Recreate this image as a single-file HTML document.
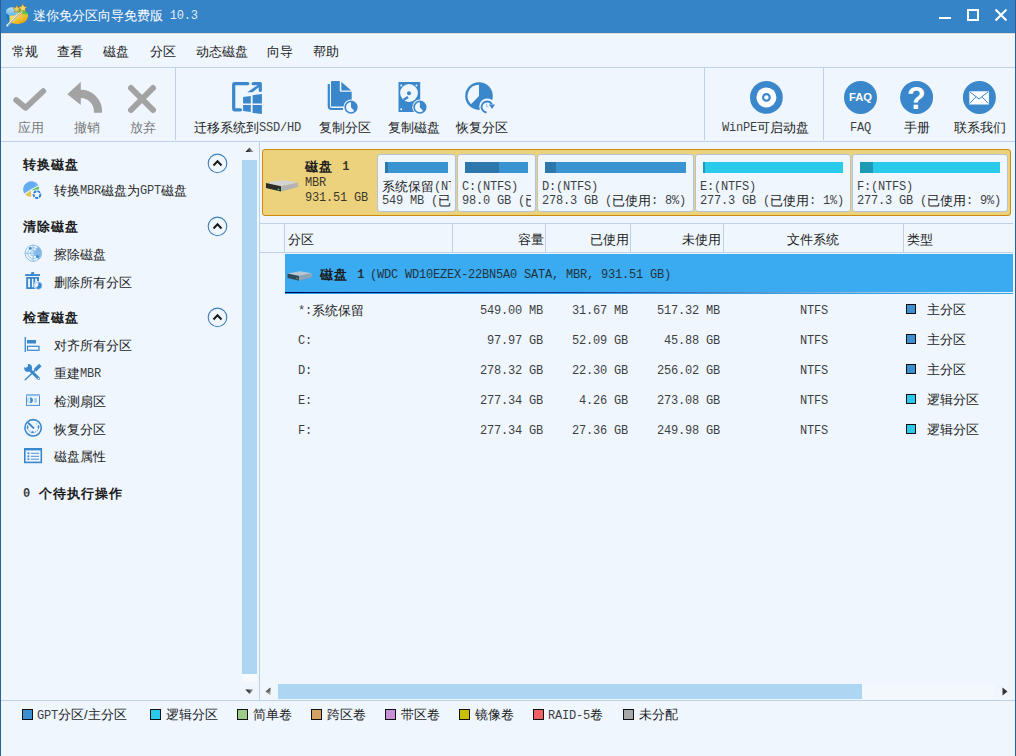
<!DOCTYPE html>
<html><head><meta charset="utf-8">
<style>
*{margin:0;padding:0;box-sizing:border-box}
html,body{width:1016px;height:756px;overflow:hidden;background:#eff6fe}
body{position:relative;font-family:"Liberation Sans",sans-serif;color:#111}
.a{position:absolute}
.t{position:absolute;font-size:13px;line-height:13px;white-space:nowrap;color:#1c1c1c}
.b{font-weight:bold;letter-spacing:1px}
.l{font-family:"Liberation Mono",monospace;font-size:12px;letter-spacing:-0.2px;position:relative;top:-1px;opacity:0.85}
.g{color:#7a7a7a}
.hl{position:absolute;height:1px;background:#bcd0e8}
.vl{position:absolute;width:1px;background:#bcd0e8}
.pb{position:absolute;top:154px;height:58px;background:#eff6fe;border:1px solid #b5c3d4;border-radius:3px;overflow:hidden}
.bar{position:absolute;left:7px;top:7px;height:11px}
.sq{position:absolute;width:11px;height:11px;border:1px solid #111}
</style></head><body>
<!-- window borders -->
<div class="a" style="left:0;top:0;width:1016px;height:33px;background:#3584c8"></div>
<div class="a" style="left:0;top:33px;width:1016px;height:1px;background:#dcd6d3"></div>
<div class="a" style="left:0;top:34px;width:1016px;height:1px;background:#fff"></div>
<div class="a" style="left:0;top:0;width:1px;height:756px;background:#2b5f98"></div>
<div class="a" style="left:1015px;top:0;width:1px;height:756px;background:#2b5f98"></div>
<div class="t" style="left:33px;top:9px;color:#fff">迷你免分区向导免费版 <span class="l" style="margin-left:3px">10.3</span></div>
<!-- window controls -->
<div class="a" style="left:939px;top:17px;width:12px;height:2px;background:#fff"></div>
<div class="a" style="left:967px;top:9px;width:12px;height:12px;border:2px solid #fff"></div>
<svg class="a" style="left:994px;top:8px" width="14" height="14"><path d="M1.5 1.5L12.5 12.5M12.5 1.5L1.5 12.5" stroke="#fff" stroke-width="2"/></svg>

<!-- menu -->
<div class="t" style="left:12px;top:45px">常规</div>
<div class="t" style="left:57px;top:45px">查看</div>
<div class="t" style="left:103px;top:45px">磁盘</div>
<div class="t" style="left:150px;top:45px">分区</div>
<div class="t" style="left:196px;top:45px">动态磁盘</div>
<div class="t" style="left:267px;top:45px">向导</div>
<div class="t" style="left:313px;top:45px">帮助</div>
<div class="hl" style="left:1px;top:67px;width:1014px"></div>

<!-- toolbar -->
<div class="vl" style="left:175px;top:68px;height:72px"></div>
<div class="vl" style="left:704px;top:68px;height:72px"></div>
<div class="vl" style="left:823px;top:68px;height:72px"></div>
<div class="t g" style="left:18px;top:121px">应用</div>
<div class="t g" style="left:74px;top:121px">撤销</div>
<div class="t g" style="left:130px;top:121px">放弃</div>
<div class="t" style="left:194px;top:121px">迁移系统到<span class="l">SSD/HD</span></div>
<div class="t" style="left:319px;top:121px">复制分区</div>
<div class="t" style="left:388px;top:121px">复制磁盘</div>
<div class="t" style="left:456px;top:121px">恢复分区</div>
<div class="t" style="left:722px;top:121px"><span class="l">WinPE</span>可启动盘</div>
<div class="t" style="left:850px;top:121px"><span class="l">FAQ</span></div>
<div class="t" style="left:904px;top:121px">手册</div>
<div class="t" style="left:954px;top:121px">联系我们</div>
<div class="hl" style="left:1px;top:141px;width:1014px"></div>

<!-- left panel -->
<div class="vl" style="left:259px;top:142px;height:558px"></div>
<div class="t b" style="left:23px;top:158px">转换磁盘</div>
<div class="t" style="left:54px;top:184px">转换<span class="l">MBR</span>磁盘为<span class="l">GPT</span>磁盘</div>
<div class="t b" style="left:23px;top:220px">清除磁盘</div>
<div class="t" style="left:54px;top:248px">擦除磁盘</div>
<div class="t" style="left:54px;top:276px">删除所有分区</div>
<div class="t b" style="left:23px;top:311px">检查磁盘</div>
<div class="t" style="left:54px;top:339px">对齐所有分区</div>
<div class="t" style="left:54px;top:367px">重建<span class="l">MBR</span></div>
<div class="t" style="left:54px;top:395px">检测扇区</div>
<div class="t" style="left:54px;top:423px">恢复分区</div>
<div class="t" style="left:54px;top:450px">磁盘属性</div>
<div class="t b" style="left:23px;top:487px"><span class="l" style="font-weight:bold">0</span>&nbsp; 个待执行操作</div>
<!-- left scrollbar -->
<div class="a" style="left:242px;top:160px;width:15px;height:514px;background:#acd6f1"></div>
<div class="a" style="left:242px;top:674px;width:15px;height:8px;background:#f6fafd"></div>
<svg class="a" style="left:245px;top:147px" width="9" height="6"><defs><linearGradient id="ga" x1="0" y1="0" x2="1" y2="0"><stop offset="0" stop-color="#000"/><stop offset="1" stop-color="#b0b0b0"/></linearGradient></defs><path d="M0.5 5L4.5 0.5L8.5 5Z" fill="url(#ga)"/></svg>
<svg class="a" style="left:245px;top:689px" width="9" height="6"><path d="M0.5 0.5L4.5 5L8.5 0.5Z" fill="url(#ga)"/></svg>
<div class="hl" style="left:1px;top:700px;width:1014px"></div>

<!-- disk map -->
<div class="a" style="left:262px;top:149px;width:749px;height:67px;background:#ecd27c;border:1px solid #d08a0a;border-radius:3px"></div>
<div class="t b" style="left:305px;top:160px">磁盘&nbsp; <span class="l" style="font-weight:bold">1</span></div>
<div class="t" style="left:305px;top:176px"><span class="l">MBR</span></div>
<div class="t" style="left:305px;top:191px"><span class="l">931.51 GB</span></div>

<div class="pb" style="left:377px;width:79px"><div class="bar" style="width:63px;background:#3c93d2"><div class="a" style="left:0;top:0;width:3px;height:11px;background:#2d77ad"></div></div><div class="a" style="left:4px;right:4px;top:0;bottom:0;overflow:hidden"><div class="t" style="left:0;top:25px">系统保留<span class="l">(NTFS)</span></div><div class="t" style="left:0;top:39px"><span class="l">549 MB (</span>已使用</div></div></div>
<div class="pb" style="left:457px;width:79px"><div class="bar" style="width:63px;background:#3c93d2"><div class="a" style="left:0;top:0;width:34px;height:11px;background:#2d77ad"></div></div><div class="a" style="left:4px;right:4px;top:0;bottom:0;overflow:hidden"><div class="t" style="left:0;top:25px"><span class="l">C:(NTFS)</span></div><div class="t" style="left:0;top:39px"><span class="l">98.0 GB (</span>已使用</div></div></div>
<div class="pb" style="left:537px;width:157px"><div class="bar" style="width:141px;background:#3c93d2"><div class="a" style="left:0;top:0;width:11px;height:11px;background:#2d77ad"></div></div><div class="a" style="left:4px;right:4px;top:0;bottom:0;overflow:hidden"><div class="t" style="left:0;top:25px"><span class="l">D:(NTFS)</span></div><div class="t" style="left:0;top:39px"><span class="l">278.3 GB (</span>已使用<span class="l">: 8%)</span></div></div></div>
<div class="pb" style="left:695px;width:156px"><div class="bar" style="width:140px;background:#2acbea"><div class="a" style="left:0;top:0;width:2px;height:11px;background:#1d9ab5"></div></div><div class="a" style="left:4px;right:4px;top:0;bottom:0;overflow:hidden"><div class="t" style="left:0;top:25px"><span class="l">E:(NTFS)</span></div><div class="t" style="left:0;top:39px"><span class="l">277.3 GB (</span>已使用<span class="l">: 1%)</span></div></div></div>
<div class="pb" style="left:852px;width:156px"><div class="bar" style="width:140px;background:#2acbea"><div class="a" style="left:0;top:0;width:13px;height:11px;background:#1d9ab5"></div></div><div class="a" style="left:4px;right:4px;top:0;bottom:0;overflow:hidden"><div class="t" style="left:0;top:25px"><span class="l">F:(NTFS)</span></div><div class="t" style="left:0;top:39px"><span class="l">277.3 GB (</span>已使用<span class="l">: 9%)</span></div></div></div>

<!-- table header -->
<div class="hl" style="left:260px;top:223px;width:753px"></div>
<div class="hl" style="left:260px;top:252px;width:753px"></div>
<div class="vl" style="left:284px;top:224px;height:28px"></div>
<div class="vl" style="left:452px;top:224px;height:28px"></div>
<div class="vl" style="left:545px;top:224px;height:28px"></div>
<div class="vl" style="left:630px;top:224px;height:28px"></div>
<div class="vl" style="left:723px;top:224px;height:28px"></div>
<div class="vl" style="left:903px;top:224px;height:28px"></div>
<div class="t" style="left:288px;top:233px">分区</div>
<div class="t" style="left:518px;top:233px">容量</div>
<div class="t" style="left:590px;top:233px">已使用</div>
<div class="t" style="left:682px;top:233px">未使用</div>
<div class="t" style="left:787px;top:233px">文件系统</div>
<div class="t" style="left:907px;top:233px">类型</div>

<!-- selected disk row -->
<div class="a" style="left:285px;top:254px;width:728px;height:38px;background:#3aabf0"></div>
<div class="a" style="left:285px;top:292px;width:728px;height:1px;background:linear-gradient(90deg,#000448,#1a3f8a 40%,#8fb0d8 75%,#f2f2f2)"></div>
<div class="a" style="left:285px;top:293px;width:728px;height:1px;background:#2aa3f0"></div>
<div class="t b" style="left:320px;top:268px">磁盘&nbsp; <span class="l" style="font-weight:bold">1</span></div>
<div class="t" style="left:370px;top:268px"><span class="l">(WDC WD10EZEX-22BN5A0 SATA, MBR, 931.51 GB)</span></div>

<!-- rows -->
<div class="t" style="left:298px;top:304px"><span class="l">*:</span>系统保留</div>
<div class="t r" style="right:473px;top:304px"><span class="l">549.00 MB</span></div>
<div class="t r" style="right:388px;top:304px"><span class="l">31.67 MB</span></div>
<div class="t r" style="right:296px;top:304px"><span class="l">517.32 MB</span></div>
<div class="t" style="left:800px;top:304px"><span class="l">NTFS</span></div>
<div class="sq" style="width:10px;height:10px;left:906px;top:304px;background:#3c8fd0"></div>
<div class="t" style="left:927px;top:303px">主分区</div>
<div class="t" style="left:298px;top:334px"><span class="l">C:</span></div>
<div class="t r" style="right:473px;top:334px"><span class="l">97.97 GB</span></div>
<div class="t r" style="right:388px;top:334px"><span class="l">52.09 GB</span></div>
<div class="t r" style="right:296px;top:334px"><span class="l">45.88 GB</span></div>
<div class="t" style="left:800px;top:334px"><span class="l">NTFS</span></div>
<div class="sq" style="width:10px;height:10px;left:906px;top:334px;background:#3c8fd0"></div>
<div class="t" style="left:927px;top:333px">主分区</div>
<div class="t" style="left:298px;top:364px"><span class="l">D:</span></div>
<div class="t r" style="right:473px;top:364px"><span class="l">278.32 GB</span></div>
<div class="t r" style="right:388px;top:364px"><span class="l">22.30 GB</span></div>
<div class="t r" style="right:296px;top:364px"><span class="l">256.02 GB</span></div>
<div class="t" style="left:800px;top:364px"><span class="l">NTFS</span></div>
<div class="sq" style="width:10px;height:10px;left:906px;top:364px;background:#3c8fd0"></div>
<div class="t" style="left:927px;top:363px">主分区</div>
<div class="t" style="left:298px;top:394px"><span class="l">E:</span></div>
<div class="t r" style="right:473px;top:394px"><span class="l">277.34 GB</span></div>
<div class="t r" style="right:388px;top:394px"><span class="l">4.26 GB</span></div>
<div class="t r" style="right:296px;top:394px"><span class="l">273.08 GB</span></div>
<div class="t" style="left:800px;top:394px"><span class="l">NTFS</span></div>
<div class="sq" style="width:10px;height:10px;left:906px;top:394px;background:#2ac8ea"></div>
<div class="t" style="left:927px;top:393px">逻辑分区</div>
<div class="t" style="left:298px;top:424px"><span class="l">F:</span></div>
<div class="t r" style="right:473px;top:424px"><span class="l">277.34 GB</span></div>
<div class="t r" style="right:388px;top:424px"><span class="l">27.36 GB</span></div>
<div class="t r" style="right:296px;top:424px"><span class="l">249.98 GB</span></div>
<div class="t" style="left:800px;top:424px"><span class="l">NTFS</span></div>
<div class="sq" style="width:10px;height:10px;left:906px;top:424px;background:#2ac8ea"></div>
<div class="t" style="left:927px;top:423px">逻辑分区</div>
<!-- right scrollbar -->
<svg class="a" style="left:265px;top:687px" width="6" height="9"><defs><linearGradient id="gb" x1="0" y1="0" x2="0.3" y2="1"><stop offset="0" stop-color="#000"/><stop offset="1" stop-color="#b8b8b8"/></linearGradient></defs><path d="M5.5 0.5L0.5 4.5L5.5 8.5Z" fill="url(#gb)"/></svg>
<svg class="a" style="left:1002px;top:687px" width="6" height="9"><path d="M0.5 0.5L5.5 4.5L0.5 8.5Z" fill="#333"/></svg>
<div class="a" style="left:278px;top:684px;width:584px;height:15px;background:#acd6f1"></div>
<div class="a" style="left:862px;top:684px;width:133px;height:15px;background:#f3f8fd"></div>

<!-- legend -->
<div class="sq" style="left:22px;top:709px;background:#3c8fd0"></div><div class="t" style="left:37px;top:708px"><span class="l" style="top:0">GPT</span>分区/主分区</div>
<div class="sq" style="left:150px;top:709px;background:#2ac8ea"></div><div class="t" style="left:166px;top:708px">逻辑分区</div>
<div class="sq" style="left:237px;top:709px;background:#9ecb88"></div><div class="t" style="left:253px;top:708px">简单卷</div>
<div class="sq" style="left:311px;top:709px;background:#d2a263"></div><div class="t" style="left:327px;top:708px">跨区卷</div>
<div class="sq" style="left:385px;top:709px;background:#c890d8"></div><div class="t" style="left:401px;top:708px">带区卷</div>
<div class="sq" style="left:459px;top:709px;background:#c8c000"></div><div class="t" style="left:475px;top:708px">镜像卷</div>
<div class="sq" style="left:533px;top:709px;background:#f06262"></div><div class="t" style="left:548px;top:708px"><span class="l" style="top:0">RAID-5</span>卷</div>
<div class="sq" style="left:623px;top:709px;background:#a8a8a8"></div><div class="t" style="left:639px;top:708px">未分配</div>

<!-- ICONS -->
<svg class="a" style="left:0;top:0" width="34" height="32" viewBox="0 0 34 32">
 <defs><linearGradient id="yg" x1="0" y1="0" x2="1" y2="1"><stop offset="0" stop-color="#fff08a"/><stop offset="0.55" stop-color="#f2c42a"/><stop offset="1" stop-color="#dc8c12"/></linearGradient>
 <linearGradient id="bg1" x1="0" y1="0" x2="0" y2="1"><stop offset="0" stop-color="#bfe3f8"/><stop offset="1" stop-color="#5fb2e6"/></linearGradient></defs>
 <ellipse cx="17" cy="15.6" rx="10.8" ry="8.6" fill="#1678c8"/>
 <path d="M9.5 13 Q16 10 27.8 13.5 V17 A10.8 7.2 0 0 1 9.5 22 Z" fill="url(#yg)"/>
 <ellipse cx="12" cy="11.5" rx="6" ry="4.3" fill="url(#bg1)"/>
 <path d="M17 12.5 L19 9 Q25 9 27.8 13.5 L27.8 15 Z" fill="#58c84a"/>
 <path d="M17 12.5 L27.8 15 V17 L17 14 Z" fill="#e6c22e"/>
 <path d="M7.2 25.5 L21.5 11.5" stroke="#e8e8e8" stroke-width="1.8" stroke-linecap="round"/>
 <path d="M8 25.2 L21.5 11.8" stroke="#8a8a8a" stroke-width="0.8"/>
 <path d="M16.8 5.2l1.2 2.4 2.6.3-1.9 1.8.5 2.6-2.4-1.3-2.4 1.3.5-2.6-1.9-1.8 2.6-.3z" fill="#ead060" stroke="#8a6a10" stroke-width="0.5"/>
 <path d="M22.8 3.8l1.4 2.7 2.9.4-2.1 2 .5 2.9-2.7-1.4-2.7 1.4.5-2.9-2.1-2 2.9-.4z" fill="#f2d868" stroke="#8a6a10" stroke-width="0.5"/>
 <path d="M21 13.5l1 2 2.2.3-1.6 1.5.4 2.2-2-1.1-2 1.1.4-2.2-1.6-1.5 2.2-.3z" fill="#e8c850" opacity="0.8"/>
</svg>

<!-- grey toolbar icons -->
<svg class="a" style="left:12px;top:85px" width="36" height="28"><path d="M4.2 15 L13.5 22.8 L31.2 6.2" fill="none" stroke="#a3a3a3" stroke-width="5.8" stroke-linecap="round" stroke-linejoin="round"/></svg>
<svg class="a" style="left:66px;top:81px" width="38" height="34"><path d="M1.3 13.3 L14.8 0.8 L14.8 24.1 Z" fill="#a3a3a3"/><path d="M14 12.95 A17.15 17.15 0 0 1 31.95 30.1 V31.7" fill="none" stroke="#a3a3a3" stroke-width="8.2"/></svg>
<svg class="a" style="left:126px;top:83px" width="32" height="32"><path d="M5 5 L27 27 M27 5 L5 27" fill="none" stroke="#a3a3a3" stroke-width="6" stroke-linecap="round"/></svg>

<!-- migrate os -->
<svg class="a" style="left:228px;top:78px" width="38" height="40">
 <path d="M19.8 5.6 H6.5 Q5.7 5.6 5.7 6.4 V31 Q5.7 31.8 6.5 31.8 H12.5" fill="none" stroke="#3a87cc" stroke-width="3.2" stroke-linecap="round"/>
 <path d="M25.2 5.7 H32.3 V12.5" fill="none" stroke="#3a87cc" stroke-width="3.2" stroke-linecap="round" stroke-linejoin="round"/>
 <path d="M19.3 14.3 L30.5 6.5 L32 8.2 L24.5 14.3 Z" fill="#3a87cc"/>
 <path d="M15.1 19 L22.8 18 V25.4 H15.1Z M24.6 17.3 L33.9 16 V25.4 H24.6Z M15.1 27 H22.8 V33.9 L15.1 33Z M24.6 27 H33.9 V36 L24.6 34.9Z" fill="#3a87cc"/>
</svg>
<!-- copy partition -->
<svg class="a" style="left:320px;top:76px" width="42" height="40">
 <path d="M8.8 8 V30 Q8.8 33 11.8 33 H23" fill="none" stroke="#3a87cc" stroke-width="2.2"/>
 <path d="M11 6 Q11 5 12 5 H19.8 V14.8 Q19.8 15.8 20.8 15.8 H31.7 V30.5 H11 Z" fill="#3a87cc"/>
 <path d="M21.3 5.8 L31.2 14.6 H21.3Z" fill="#3a87cc"/>
 <circle cx="31" cy="31.2" r="7.6" fill="#eff6fe"/>
 <circle cx="31" cy="31.2" r="5.8" fill="none" stroke="#3a87cc" stroke-width="1.6"/>
 <path d="M31 31.2 V25.4 A5.8 5.8 0 0 1 34.8 35.6Z" fill="#3a87cc"/>
</svg>

<!-- copy disk -->
<svg class="a" style="left:390px;top:76px" width="42" height="40">
 <rect x="8.5" y="6" width="21.7" height="30" fill="#3a87cc"/>
 <circle cx="19" cy="17" r="8.9" fill="#eff6fe"/>
 <path d="M13.5 24 L18 21" stroke="#3a87cc" stroke-width="2.5"/>
 <circle cx="19" cy="17.3" r="2" fill="#3a87cc"/>
 <circle cx="11.2" cy="9.5" r="1" fill="#eff6fe"/><circle cx="26.5" cy="9.5" r="1" fill="#eff6fe"/><circle cx="11.2" cy="33.2" r="1" fill="#eff6fe"/>
 <circle cx="29.9" cy="31.2" r="7.6" fill="#eff6fe"/>
 <circle cx="29.9" cy="31.2" r="5.8" fill="none" stroke="#3a87cc" stroke-width="1.6"/>
 <path d="M29.9 31.2 V25.4 A5.8 5.8 0 0 1 33.7 35.6Z" fill="#3a87cc"/>
</svg>

<!-- recover partition -->
<svg class="a" style="left:456px;top:76px" width="42" height="40">
 <circle cx="23" cy="20.1" r="13.8" fill="#3a87cc"/>
 <path d="M23 20.1 V8.8 A11.3 11.3 0 0 0 15 28.2Z" fill="#eff6fe"/>
 <circle cx="31.2" cy="30.4" r="8" fill="#eff6fe"/>
 <path d="M30.6 36.5 A5.5 5.5 0 1 1 35.8 28.2" fill="none" stroke="#3a87cc" stroke-width="1.8"/>
 <path d="M33 28.5 L39 28.5 L36 33 Z" fill="#3a87cc"/>
 <path d="M30.7 27.5 V30.8 H32.5" fill="none" stroke="#9cc4ea" stroke-width="1"/>
</svg>

<!-- winpe -->
<svg class="a" style="left:749px;top:80px" width="35" height="35">
 <circle cx="17.4" cy="17.4" r="16.4" fill="#3a87cc"/>
 <circle cx="17.4" cy="17.4" r="10" fill="#fff"/>
 <circle cx="17.4" cy="17.4" r="3.3" fill="none" stroke="#3a87cc" stroke-width="2.2"/>
</svg>
<!-- faq -->
<svg class="a" style="left:843px;top:80px" width="35" height="35">
 <circle cx="17.5" cy="17.4" r="16.5" fill="#3a87cc"/>
 <text x="17.5" y="20.8" text-anchor="middle" font-family="Liberation Sans" font-weight="bold" font-size="11.2" fill="#fff">FAQ</text>
</svg>
<!-- help -->
<svg class="a" style="left:899px;top:80px" width="35" height="35">
 <circle cx="17.6" cy="17.4" r="16.5" fill="#3a87cc"/>
 <text x="17.4" y="28.6" text-anchor="middle" font-family="Liberation Sans" font-weight="bold" font-size="30.5" fill="#fff">?</text>
</svg>
<!-- mail -->
<svg class="a" style="left:962px;top:80px" width="35" height="35">
 <circle cx="17.4" cy="17.4" r="16.5" fill="#3a87cc"/>
 <rect x="7.3" y="11.3" width="19.6" height="13.2" fill="#fff"/>
 <path d="M7.8 11.8 L17 19 L26.2 11.8 M7.8 23.4 L14 16.8 M26.2 23.4 L20 16.8" fill="none" stroke="#3a87cc" stroke-width="1"/>
</svg>

<!-- collapse circles -->
<svg class="a" style="left:207px;top:153px" width="21" height="21"><circle cx="10.5" cy="10.4" r="9.3" fill="none" stroke="#3d7fbe" stroke-width="1.1"/><path d="M6.5 12.5 L10.5 8.3 L14.5 12.5" fill="none" stroke="#1a1a1a" stroke-width="2"/></svg>
<svg class="a" style="left:207px;top:216px" width="21" height="21"><circle cx="10.5" cy="10.4" r="9.3" fill="none" stroke="#3d7fbe" stroke-width="1.1"/><path d="M6.5 12.5 L10.5 8.3 L14.5 12.5" fill="none" stroke="#1a1a1a" stroke-width="2"/></svg>
<svg class="a" style="left:207px;top:307px" width="21" height="21"><circle cx="10.5" cy="10.4" r="9.3" fill="none" stroke="#3d7fbe" stroke-width="1.1"/><path d="M6.5 12.5 L10.5 8.3 L14.5 12.5" fill="none" stroke="#1a1a1a" stroke-width="2"/></svg>

<!-- left icons -->
<svg class="a" style="left:22px;top:180px" width="22" height="20">
 <path d="M9.4 9 L2.3 13.5 A7.3 7.3 0 1 1 16.3 5.3Z" fill="#66adf0"/>
 <path d="M9.8 10 L16.8 6.3 L17 11.5 Z" fill="#62c45a"/>
 <path d="M9 10.5 L3.2 14.5 A7.3 7.3 0 0 0 9.2 16.8Z" fill="#e2c758"/>
 <circle cx="15" cy="14.6" r="5" fill="#eff6fe"/>
 <circle cx="15" cy="14.6" r="3.4" fill="none" stroke="#2c7fd0" stroke-width="1.8" stroke-dasharray="3 1"/>
</svg>
<svg class="a" style="left:23px;top:243px" width="20" height="20">
 <path d="M10.2 10.2 L15.13 3.16 A8.6 8.6 0 0 1 15.73 16.79Z" fill="#7fb5e6"/>
 <circle cx="10.2" cy="10.2" r="8.1" fill="none" stroke="#8cbde8" stroke-width="1"/>
 <circle cx="10.2" cy="10.2" r="5.5" fill="none" stroke="#8cbde8" stroke-width="0.9"/>
 <circle cx="10.2" cy="10.2" r="2.8" fill="none" stroke="#8cbde8" stroke-width="0.9"/>
 <path d="M10.2 1.8 V18.6 M1.8 10.2 H18.6" stroke="#8cbde8" stroke-width="0.9"/>
 <circle cx="7.3" cy="5.4" r="1.4" fill="#3a87cc"/><circle cx="14.4" cy="13.6" r="1.4" fill="#3a87cc"/>
</svg>
<svg class="a" style="left:24px;top:271px" width="20" height="20">
 <rect x="1.2" y="3.1" width="14.8" height="1.9" fill="#3a87cc"/><rect x="7.2" y="1.1" width="2.9" height="2.2" fill="#3a87cc"/>
 <path d="M2.2 6.1 H15 V18 H2.2Z M4.1 7.7 V16.3 H6 V7.7Z M7.9 7.7 V16.3 H9.4 V7.7Z M11.2 7.7 V16.3 H13 V7.7Z" fill="#3a87cc" fill-rule="evenodd"/>
 <circle cx="14.3" cy="14.6" r="4.6" fill="#eff6fe"/>
 <circle cx="14.3" cy="14.6" r="3.6" fill="#3a87cc"/>
 <path d="M14.3 14.6 V11 A3.6 3.6 0 0 0 11.8 17.2Z" fill="#eff6fe"/>
 <circle cx="14.3" cy="14.6" r="3.6" fill="none" stroke="#a0c8ee" stroke-width="0.6"/>
</svg>
<svg class="a" style="left:23px;top:335px" width="18" height="18">
 <rect x="1.6" y="2" width="1.3" height="15" fill="#3a87cc"/>
 <rect x="4" y="5" width="9" height="3.5" fill="#3a87cc"/>
 <rect x="4.5" y="11.3" width="11.5" height="4" fill="none" stroke="#3a87cc" stroke-width="1.2"/>
</svg>
<svg class="a" style="left:23px;top:362px" width="20" height="20">
 <path d="M12 8.6 L2.2 17.8" stroke="#3a87cc" stroke-width="1.4" stroke-linecap="round"/>
 <path d="M17.3 3 L12 8.2" stroke="#3a87cc" stroke-width="3.6" stroke-linecap="butt"/>
 <path d="M7 8 L15.6 16.5" stroke="#3a87cc" stroke-width="3" stroke-linecap="round"/>
 <circle cx="5.1" cy="5.9" r="3.9" fill="#3a87cc"/>
 <circle cx="2.6" cy="3.3" r="2.4" fill="#eff6fe"/>
 <circle cx="15.6" cy="16.6" r="0.8" fill="#eff6fe"/>
</svg>
<svg class="a" style="left:25px;top:393px" width="16" height="14">
 <rect x="1.5" y="1.8" width="13" height="10.6" fill="none" stroke="#4a90d0" stroke-width="1"/>
 <rect x="1" y="1.3" width="14" height="1.8" fill="#8dbde8"/>
 <circle cx="5.2" cy="7.2" r="2.4" fill="none" stroke="#8dbde8" stroke-width="0.9"/>
 <path d="M5.2 7.2 V4.6 A2.6 2.6 0 0 1 5.2 9.8Z" fill="#3a87cc"/>
 <rect x="9.2" y="5" width="2.7" height="4.6" fill="#a6cdee"/>
</svg>
<svg class="a" style="left:23px;top:418px" width="20" height="20">
 <circle cx="10.1" cy="9.8" r="8.2" fill="none" stroke="#3a87cc" stroke-width="1.6"/>
 <path d="M5.6 5.3 L10.4 9.9" stroke="#3a87cc" stroke-width="2" stroke-linecap="round"/>
 <path d="M4.6 9.5 A5.4 5.2 0 0 0 15.5 9" fill="none" stroke="#4f92d4" stroke-width="1" stroke-dasharray="1.2 0.8"/>
 <path d="M4.6 6.8 L5.6 9.2 L4.6 11.3 L3.6 9.2Z M15.5 6.4 L16.5 8.8 L15.5 10.9 L14.5 8.8Z M9.6 12.9 L11.4 14.2 L9.6 15.2 L7.8 14.2Z" fill="#3a87cc"/>
 <path d="M13.3 6.5 L14 5" stroke="#7ab3e3" stroke-width="0.8"/>
</svg>
<svg class="a" style="left:24px;top:447px" width="20" height="18">
 <rect x="0.8" y="1.8" width="16.5" height="13.6" fill="none" stroke="#3a87cc" stroke-width="1.6"/>
 <rect x="0.8" y="1.8" width="16.5" height="1.6" fill="#3a87cc"/>
 <rect x="3.5" y="5.4" width="1.8" height="1.8" fill="#3a87cc"/><rect x="3.5" y="8.4" width="1.8" height="1.8" fill="#3a87cc"/><rect x="3.5" y="11.3" width="1.8" height="1.8" fill="#3a87cc"/>
 <path d="M6.8 6.3 H15 M6.8 9.3 H15 M6.8 12.2 H15" stroke="#3a87cc" stroke-width="0.9"/>
</svg>

<!-- disk icons -->
<svg class="a" style="left:264px;top:178px" width="36" height="16">
 <path d="M2 5 L18.6 2 L34 4.6 L17 8.2Z" fill="#d3d3d3"/>
 <path d="M2 5 L17 8.2 L17 13.5 L2 10Z" fill="#2a2b2a"/>
 <path d="M17 8.2 L34 4.6 L34 9 L17 13.5Z" fill="#b4b4b4"/>
 <circle cx="14.5" cy="11.3" r="0.9" fill="#2ee050"/>
</svg>
<svg class="a" style="left:286px;top:269px" width="28" height="14">
 <path d="M1.5 4.6 L14 2.3 L26 4.2 L13 7Z" fill="#b8c6d2"/>
 <path d="M1.5 4.6 L13 7 L13 11.8 L1.5 9Z" fill="#34485c"/>
 <path d="M13 7 L26 4.2 L26 8 L13 11.8Z" fill="#8fa2b4"/>
 <circle cx="11" cy="9.5" r="0.7" fill="#2ee050"/>
</svg>
</body></html>
